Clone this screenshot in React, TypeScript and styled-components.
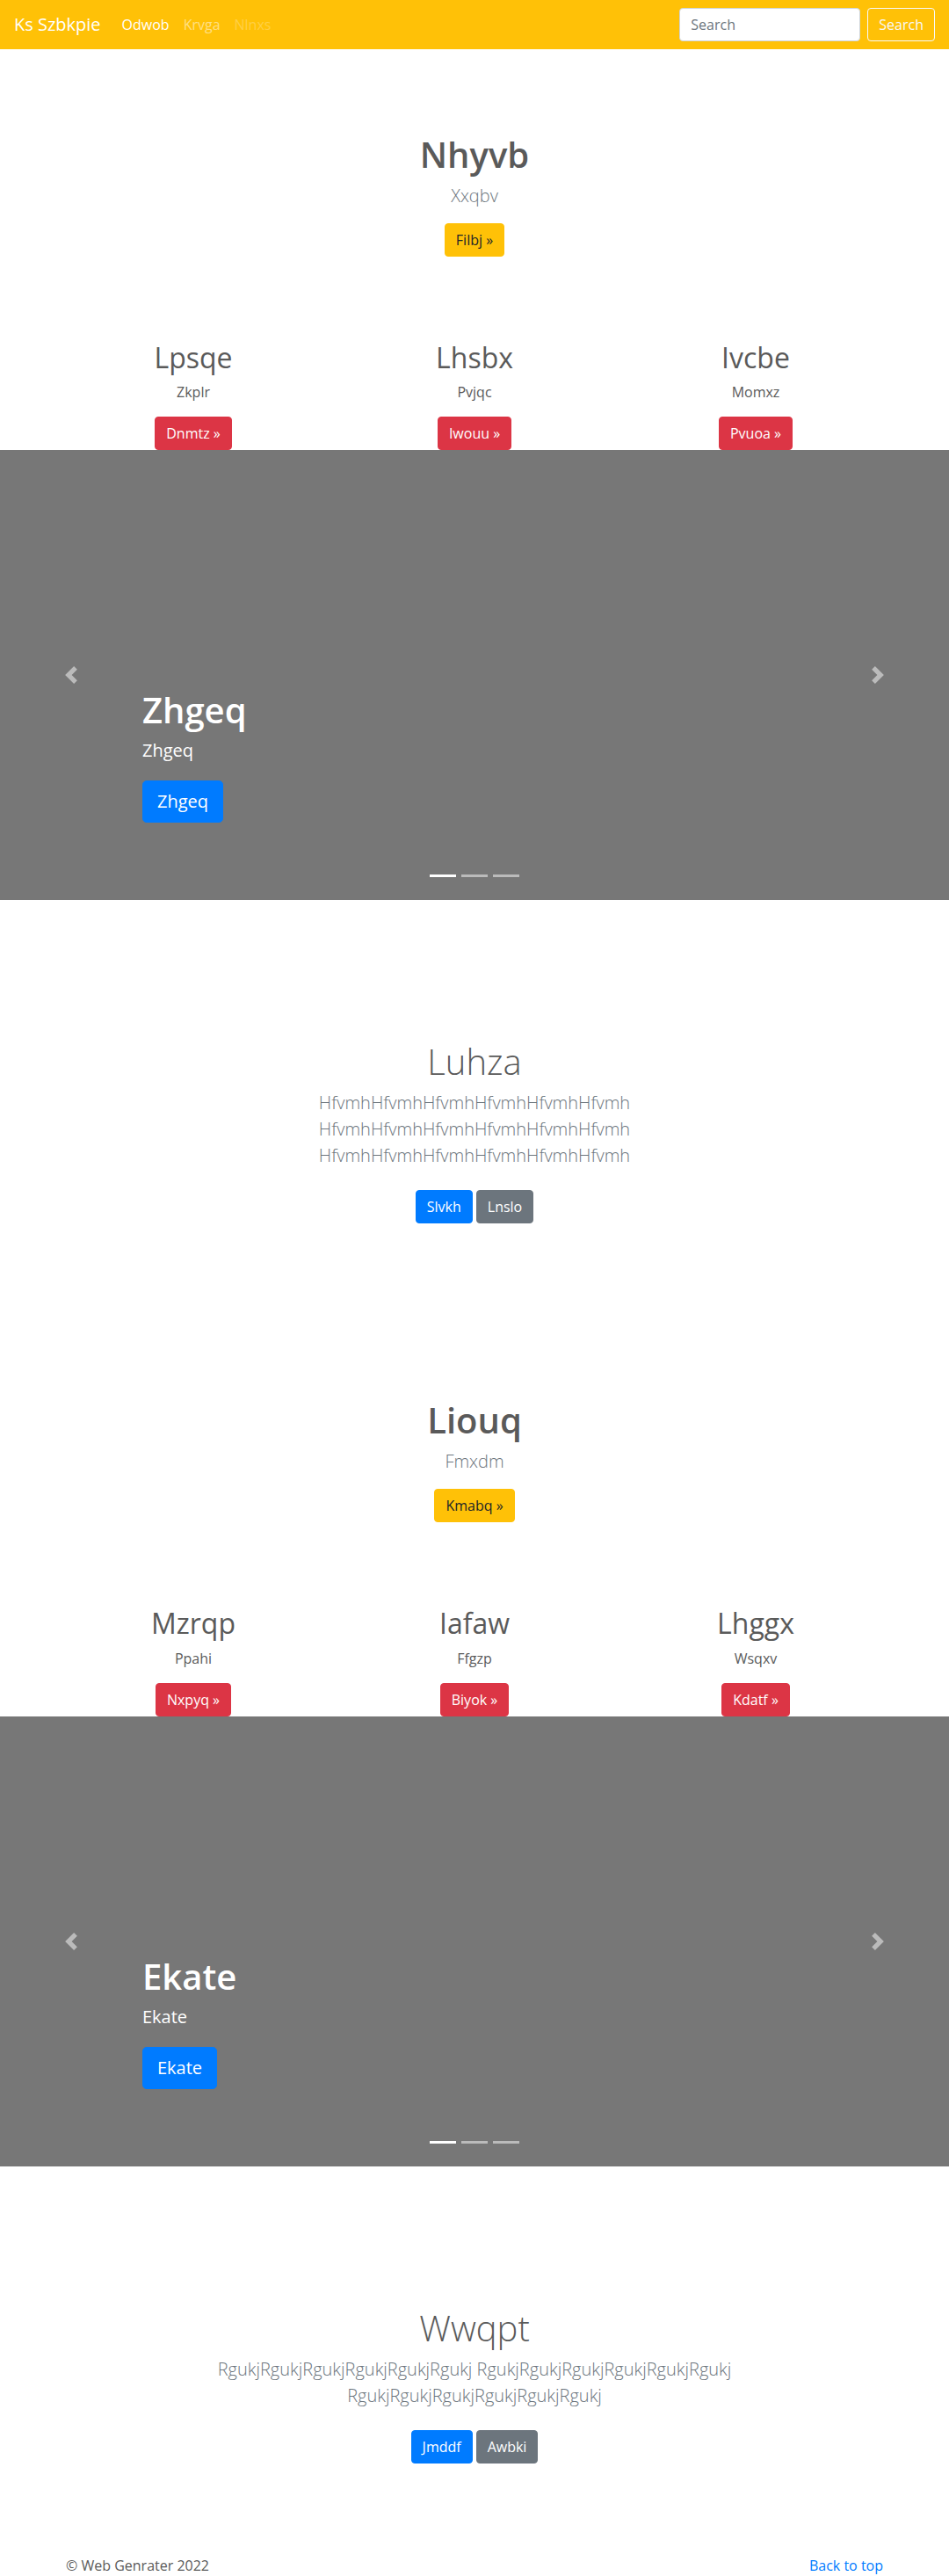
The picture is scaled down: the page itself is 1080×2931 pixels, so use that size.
import styled, { createGlobalStyle } from 'styled-components'

const GlobalStyle = createGlobalStyle`
  *, *::before, *::after { box-sizing: border-box; }
  body {
    margin: 0;
    font-family: "Open Sans", "Liberation Sans", sans-serif;
    font-size: 16px;
    line-height: 1.5;
    color: #5a5a5a;
    background: #fff;
  }
  h1, h2, p { margin: 0; }
`

type Variant = 'warning' | 'danger' | 'primary' | 'secondary' | 'outline'

const colors: Record<Variant, { bg: string; fg: string; border: string }> = {
  warning: { bg: '#ffc107', fg: '#212529', border: '#ffc107' },
  danger: { bg: '#dc3545', fg: '#fff', border: '#dc3545' },
  primary: { bg: '#007bff', fg: '#fff', border: '#007bff' },
  secondary: { bg: '#6c757d', fg: '#fff', border: '#6c757d' },
  outline: { bg: 'transparent', fg: '#f8f9fa', border: '#f8f9fa' },
}

const Button = styled.a<{ $variant: Variant; $large?: boolean }>`
  display: inline-block;
  padding: ${p => (p.$large ? '8px 16px' : '6px 12px')};
  font-family: inherit;
  font-size: ${p => (p.$large ? '20px' : '16px')};
  font-weight: 400;
  line-height: 1.5;
  color: ${p => colors[p.$variant].fg};
  background: ${p => colors[p.$variant].bg};
  border: 1px solid ${p => colors[p.$variant].border};
  border-radius: ${p => (p.$large ? '4.8px' : '4px')};
  text-decoration: none;
  white-space: nowrap;
  cursor: pointer;
`

/* navbar */
const Navbar = styled.nav`
  display: flex;
  align-items: center;
  height: 56px;
  padding: 8px 16px;
  background: #ffc107;
`

const Brand = styled.a`
  padding: 5px 0;
  margin-right: 16px;
  font-size: 20px;
  line-height: 30px;
  color: #fff;
  text-decoration: none;
`

const NavMenu = styled.ul`
  display: flex;
  margin: 0;
  padding: 0;
  list-style: none;
`

const linkColor = {
  active: '#fff',
  normal: 'rgba(255, 255, 255, 0.5)',
  disabled: 'rgba(255, 255, 255, 0.25)',
}

const NavLink = styled.a<{ $state: keyof typeof linkColor }>`
  display: block;
  padding: 8px;
  color: ${p => linkColor[p.$state]};
  text-decoration: none;
`

const SearchForm = styled.form`
  display: flex;
  align-items: center;
  margin-left: auto;
`

const SearchInput = styled.input`
  width: 206px;
  height: 38px;
  margin-right: 8px;
  padding: 6px 12px;
  font-family: inherit;
  font-size: 16px;
  color: #495057;
  background: #fff;
  border: 1px solid #ced4da;
  border-radius: 4px;
  outline: none;
  &::placeholder { color: #6c757d; }
`

/* hero */
const Hero = styled.section`
  padding: 96px 15px;
  text-align: center;
`

const HeroTitle = styled.h1`
  margin-bottom: 8px;
  font-size: 40px;
  font-weight: 600;
  line-height: 1.2;
`

const Lead = styled.p`
  margin-bottom: 16px;
  font-size: 20px;
  font-weight: 300;
  line-height: 1.5;
  color: #6c757d;
`

const Actions = styled.div<{ $spaced?: boolean }>`
  display: flex;
  justify-content: center;
  gap: 4px;
  padding: ${p => (p.$spaced ? '8px 0' : '0')};
`

/* marketing columns */
const Container = styled.div`
  max-width: 960px;
  margin: 0 auto;
  padding: 0 15px;
`

const FeatureRow = styled.div`
  display: grid;
  grid-template-columns: repeat(3, 1fr);
  gap: 30px;
`

const Feature = styled.div`
  text-align: center;
`

const FeatureTitle = styled.h2`
  margin-bottom: 8px;
  font-size: 32px;
  font-weight: 500;
  line-height: 1.2;
`

const FeatureText = styled.p`
  margin-bottom: 16px;
`

/* carousel */
const Carousel = styled.div`
  position: relative;
  height: 512px;
  margin-bottom: 64px;
  background: #777;
  overflow: hidden;
`

const Control = styled.a<{ $side: 'left' | 'right' }>`
  position: absolute;
  top: 0;
  bottom: 0;
  ${p => p.$side}: 0;
  width: 15%;
  display: flex;
  align-items: center;
  justify-content: center;
  opacity: 0.5;
  svg { width: 20px; height: 20px; }
`

const Caption = styled.div`
  position: absolute;
  left: 15%;
  right: 15%;
  bottom: 48px;
  padding: 20px 0;
  color: #fff;
  text-align: left;
`

const CaptionTitle = styled.h1`
  margin-bottom: 8px;
  font-size: 40px;
  font-weight: 600;
  line-height: 1.2;
`

const CaptionText = styled.p`
  margin-bottom: 20px;
  font-size: 20px;
  line-height: 1.4;
`

const CaptionAction = styled.div`
  display: flex;
  margin-bottom: 20px;
`

const Indicators = styled.ol`
  position: absolute;
  left: 15%;
  right: 15%;
  bottom: 0;
  display: flex;
  justify-content: center;
  margin: 0 0 16px;
  padding: 0;
  list-style: none;
`

const Indicator = styled.li<{ $active?: boolean }>`
  box-sizing: content-box;
  width: 30px;
  height: 3px;
  margin: 0 3px;
  border-top: 10px solid transparent;
  border-bottom: 10px solid transparent;
  background-color: #fff;
  background-clip: padding-box;
  opacity: ${p => (p.$active ? 1 : 0.5)};
`

/* album-style section */
const Album = styled.section`
  padding: 96px 15px;
  text-align: center;
`

const AlbumInner = styled.div`
  max-width: 640px;
  margin: 0 auto;
`

const AlbumTitle = styled.h1`
  margin-bottom: 8px;
  font-size: 40px;
  font-weight: 300;
  line-height: 1.2;
`

/* footer */
const Footer = styled.footer`
  display: flex;
  justify-content: space-between;
  max-width: 960px;
  margin: 0 auto;
  padding: 0 15px;
  a { color: #007bff; text-decoration: none; }
`

interface Block {
  hero: { title: string; text: string; action: string }
  features: { title: string; text: string; action: string }[]
  slide: string
  album: { title: string; text: string; primary: string; secondary: string }
}

const blocks: Block[] = [
  {
    hero: { title: 'Nhyvb', text: 'Xxqbv', action: 'Filbj' },
    features: [
      { title: 'Lpsqe', text: 'Zkplr', action: 'Dnmtz' },
      { title: 'Lhsbx', text: 'Pvjqc', action: 'Iwouu' },
      { title: 'Ivcbe', text: 'Momxz', action: 'Pvuoa' },
    ],
    slide: 'Zhgeq',
    album: {
      title: 'Luhza',
      text: Array(3).fill('Hfvmh'.repeat(6)).join(' '),
      primary: 'Slvkh',
      secondary: 'Lnslo',
    },
  },
  {
    hero: { title: 'Liouq', text: 'Fmxdm', action: 'Kmabq' },
    features: [
      { title: 'Mzrqp', text: 'Ppahi', action: 'Nxpyq' },
      { title: 'Iafaw', text: 'Ffgzp', action: 'Biyok' },
      { title: 'Lhggx', text: 'Wsqxv', action: 'Kdatf' },
    ],
    slide: 'Ekate',
    album: {
      title: 'Wwqpt',
      text: Array(3).fill('Rgukj'.repeat(6)).join(' '),
      primary: 'Jmddf',
      secondary: 'Awbki',
    },
  },
]

const PrevIcon = () => (
  <svg viewBox="0 0 8 8" fill="#fff">
    <path d="M5.25 0l-4 4 4 4 1.5-1.5L4.25 4l2.5-2.5L5.25 0z" />
  </svg>
)

const NextIcon = () => (
  <svg viewBox="0 0 8 8" fill="#fff">
    <path d="M2.75 0l-1.5 1.5L3.75 4l-2.5 2.5L2.75 8l4-4-4-4z" />
  </svg>
)

function Section({ block }: { block: Block }) {
  const { hero, features, slide, album } = block
  return (
    <>
      <Hero>
        <HeroTitle>{hero.title}</HeroTitle>
        <Lead>{hero.text}</Lead>
        <Actions>
          <Button $variant="warning">{hero.action} &raquo;</Button>
        </Actions>
      </Hero>

      <Container>
        <FeatureRow>
          {features.map(f => (
            <Feature key={f.title}>
              <FeatureTitle>{f.title}</FeatureTitle>
              <FeatureText>{f.text}</FeatureText>
              <Actions>
                <Button $variant="danger">{f.action} &raquo;</Button>
              </Actions>
            </Feature>
          ))}
        </FeatureRow>
      </Container>

      <Carousel>
        <Control $side="left"><PrevIcon /></Control>
        <Caption>
          <CaptionTitle>{slide}</CaptionTitle>
          <CaptionText>{slide}</CaptionText>
          <CaptionAction>
            <Button $variant="primary" $large>{slide}</Button>
          </CaptionAction>
        </Caption>
        <Control $side="right"><NextIcon /></Control>
        <Indicators>
          <Indicator $active />
          <Indicator />
          <Indicator />
        </Indicators>
      </Carousel>

      <Album>
        <AlbumInner>
          <AlbumTitle>{album.title}</AlbumTitle>
          <Lead>{album.text}</Lead>
          <Actions $spaced>
            <Button $variant="primary">{album.primary}</Button>
            <Button $variant="secondary">{album.secondary}</Button>
          </Actions>
        </AlbumInner>
      </Album>
    </>
  )
}

export default function App() {
  return (
    <>
      <GlobalStyle />
      <Navbar>
        <Brand href="#">Ks Szbkpie</Brand>
        <NavMenu>
          <li><NavLink $state="active" href="#">Odwob</NavLink></li>
          <li><NavLink $state="normal" href="#">Krvga</NavLink></li>
          <li><NavLink $state="disabled">Nlnxs</NavLink></li>
        </NavMenu>
        <SearchForm onSubmit={e => e.preventDefault()}>
          <SearchInput type="text" placeholder="Search" />
          <Button as="button" type="submit" $variant="outline">Search</Button>
        </SearchForm>
      </Navbar>

      <main>
        {blocks.map(b => (
          <Section key={b.hero.title} block={b} />
        ))}
      </main>

      <Footer>
        <span>&copy; Web Genrater 2022</span>
        <a href="#">Back to top</a>
      </Footer>
    </>
  )
}
